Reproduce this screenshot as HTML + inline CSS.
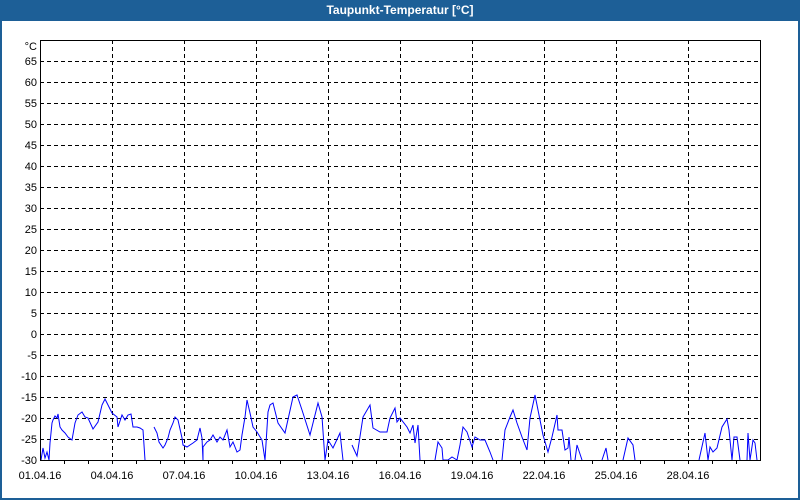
<!DOCTYPE html>
<html><head><meta charset="utf-8"><style>
html,body{margin:0;padding:0;width:800px;height:500px;overflow:hidden;background:#fff;font-family:"Liberation Sans","DejaVu Sans",sans-serif}
.win{position:absolute;left:0;top:0;width:796px;height:498px;border:2px solid #1d5f97;border-top:none;background:#fff}
.title{position:absolute;left:0;top:0;width:800px;height:21px;background:#1d5f97;color:#fff;font-weight:bold;font-size:12px;line-height:21px;text-align:center}
svg{position:absolute;left:0;top:0}
text{font-family:"Liberation Sans","DejaVu Sans",sans-serif;font-size:11px;fill:#000}
</style></head><body>
<div class="win"></div>
<div class="title">Taupunkt-Temperatur [°C]</div>
<svg width="800" height="500" viewBox="0 0 800 500">
<g stroke="#000" stroke-width="1" stroke-dasharray="4,3" shape-rendering="crispEdges">
<line x1="40" x2="760" y1="61.5" y2="61.5"/><line x1="40" x2="760" y1="82.5" y2="82.5"/><line x1="40" x2="760" y1="103.5" y2="103.5"/><line x1="40" x2="760" y1="124.5" y2="124.5"/><line x1="40" x2="760" y1="145.5" y2="145.5"/><line x1="40" x2="760" y1="166.5" y2="166.5"/><line x1="40" x2="760" y1="187.5" y2="187.5"/><line x1="40" x2="760" y1="208.5" y2="208.5"/><line x1="40" x2="760" y1="229.5" y2="229.5"/><line x1="40" x2="760" y1="250.5" y2="250.5"/><line x1="40" x2="760" y1="271.5" y2="271.5"/><line x1="40" x2="760" y1="292.5" y2="292.5"/><line x1="40" x2="760" y1="313.5" y2="313.5"/><line x1="40" x2="760" y1="334.5" y2="334.5"/><line x1="40" x2="760" y1="355.5" y2="355.5"/><line x1="40" x2="760" y1="376.5" y2="376.5"/><line x1="40" x2="760" y1="397.5" y2="397.5"/><line x1="40" x2="760" y1="418.5" y2="418.5"/><line x1="40" x2="760" y1="439.5" y2="439.5"/>
<line y1="40" y2="460" x1="112.5" x2="112.5"/><line y1="40" y2="460" x1="184.5" x2="184.5"/><line y1="40" y2="460" x1="256.5" x2="256.5"/><line y1="40" y2="460" x1="328.5" x2="328.5"/><line y1="40" y2="460" x1="400.5" x2="400.5"/><line y1="40" y2="460" x1="472.5" x2="472.5"/><line y1="40" y2="460" x1="544.5" x2="544.5"/><line y1="40" y2="460" x1="616.5" x2="616.5"/><line y1="40" y2="460" x1="688.5" x2="688.5"/>
</g>
<polyline fill="none" stroke="#0000ff" stroke-width="1" points="41,460 43,448 45,458 47,452 49,460 50,443 52,423 53,420 55,416 57,418 58,414 60,427 62,430 65,433 68,437 72,440 75,423 78,415 82,412 85,417 88,418 93,429 98,422 102,405 105,399 108,405 112,413 117,417 118,427 122,415 125,420 128,415 131,414 133,427 137,427 140,428 143,430 145,460"/>
<polyline fill="none" stroke="#0000ff" stroke-width="1" points="154,427 157,433 159,442 163,448 165,445 168,438 170,430 173,423 175,417 178,420 182,438 183,445 187,447 190,445 193,443 197,440 200,428 202,438 203,460 203,447 207,442 210,440 213,435 217,442 220,437 223,440 227,430 230,447 233,442 237,452 240,450 242,435 245,417 247,400 250,413 253,427 257,432 262,440 265,460 268,412 270,405 273,403 278,423 285,433 293,397 297,395 302,410 310,435 318,403 322,417 325,460 328,440 333,448 340,433 343,460"/>
<polyline fill="none" stroke="#0000ff" stroke-width="1" points="352,445 357,456 363,417 370,405 373,428 380,432 387,432 390,418 395,408 397,422 400,418 407,427 410,433 413,425 415,443 418,425 420,460"/>
<polyline fill="none" stroke="#0000ff" stroke-width="1" points="435,460 438,442 442,448 443,460 448,460 452,457 457,460 460,445 463,427 467,432 472,447 475,437 480,440 485,440 490,452 493,460"/>
<polyline fill="none" stroke="#0000ff" stroke-width="1" points="502,460 505,430 510,417 513,410 517,423 522,437 527,450 530,418 535,395 538,410 543,435 548,452 552,437 557,415 558,430 562,430 565,450 568,448 569,437 571,460"/>
<polyline fill="none" stroke="#0000ff" stroke-width="1" points="575,460 577,445 582,460"/>
<polyline fill="none" stroke="#0000ff" stroke-width="1" points="602,460 606,448 608,460"/>
<polyline fill="none" stroke="#0000ff" stroke-width="1" points="623,460 628,438 633,445 635,460"/>
<polyline fill="none" stroke="#0000ff" stroke-width="1" points="699,460 705,433 708,460 710,447 713,452 717,448 722,427 727,419 729,430 732,460 734,437 737,437 740,460"/>
<polyline fill="none" stroke="#0000ff" stroke-width="1" points="747,460 748,433 750,460 753,440 755,443 757,460"/>
<rect x="40.5" y="40.5" width="720" height="420" fill="none" stroke="#000" stroke-width="1" shape-rendering="crispEdges"/>
<g stroke="#000" shape-rendering="crispEdges">
<line x1="64.5" x2="64.5" y1="460" y2="464"/><line x1="88.5" x2="88.5" y1="460" y2="464"/><line x1="112.5" x2="112.5" y1="460" y2="464"/><line x1="136.5" x2="136.5" y1="460" y2="464"/><line x1="160.5" x2="160.5" y1="460" y2="464"/><line x1="184.5" x2="184.5" y1="460" y2="464"/><line x1="208.5" x2="208.5" y1="460" y2="464"/><line x1="232.5" x2="232.5" y1="460" y2="464"/><line x1="256.5" x2="256.5" y1="460" y2="464"/><line x1="280.5" x2="280.5" y1="460" y2="464"/><line x1="304.5" x2="304.5" y1="460" y2="464"/><line x1="328.5" x2="328.5" y1="460" y2="464"/><line x1="352.5" x2="352.5" y1="460" y2="464"/><line x1="376.5" x2="376.5" y1="460" y2="464"/><line x1="400.5" x2="400.5" y1="460" y2="464"/><line x1="424.5" x2="424.5" y1="460" y2="464"/><line x1="448.5" x2="448.5" y1="460" y2="464"/><line x1="472.5" x2="472.5" y1="460" y2="464"/><line x1="496.5" x2="496.5" y1="460" y2="464"/><line x1="520.5" x2="520.5" y1="460" y2="464"/><line x1="544.5" x2="544.5" y1="460" y2="464"/><line x1="568.5" x2="568.5" y1="460" y2="464"/><line x1="592.5" x2="592.5" y1="460" y2="464"/><line x1="616.5" x2="616.5" y1="460" y2="464"/><line x1="640.5" x2="640.5" y1="460" y2="464"/><line x1="664.5" x2="664.5" y1="460" y2="464"/><line x1="688.5" x2="688.5" y1="460" y2="464"/><line x1="712.5" x2="712.5" y1="460" y2="464"/><line x1="736.5" x2="736.5" y1="460" y2="464"/>
</g>
<g text-anchor="end">
<text x="37" y="50">°C</text>
<text x="37" y="65">65</text><text x="37" y="86">60</text><text x="37" y="107">55</text><text x="37" y="128">50</text><text x="37" y="149">45</text><text x="37" y="170">40</text><text x="37" y="191">35</text><text x="37" y="212">30</text><text x="37" y="233">25</text><text x="37" y="254">20</text><text x="37" y="275">15</text><text x="37" y="296">10</text><text x="37" y="317">5</text><text x="37" y="338">0</text><text x="37" y="359">-5</text><text x="37" y="380">-10</text><text x="37" y="401">-15</text><text x="37" y="422">-20</text><text x="37" y="443">-25</text><text x="37" y="464">-30</text>
</g>
<g text-anchor="middle">
<text x="40" y="479">01.04.16</text><text x="112" y="479">04.04.16</text><text x="184" y="479">07.04.16</text><text x="256" y="479">10.04.16</text><text x="328" y="479">13.04.16</text><text x="400" y="479">16.04.16</text><text x="472" y="479">19.04.16</text><text x="544" y="479">22.04.16</text><text x="616" y="479">25.04.16</text><text x="688" y="479">28.04.16</text>
</g>
</svg>
</body></html>
